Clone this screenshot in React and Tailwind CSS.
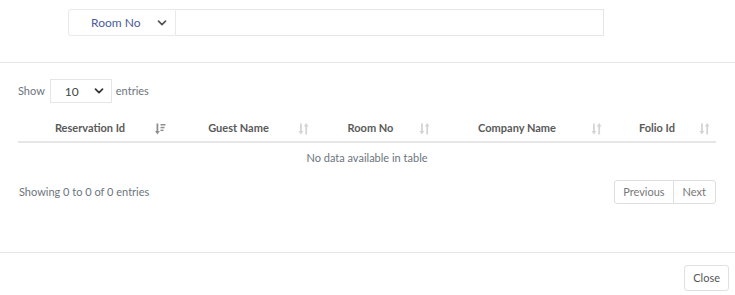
import React from 'react';

const columns = [
  { label: 'Reservation Id', width: 'w-[154px]', active: true },
  { label: 'Guest Name', width: 'w-[143px]' },
  { label: 'Room No', width: 'w-[121px]' },
  { label: 'Company Name', width: 'w-[172px]' },
  { label: 'Folio Id', width: 'w-[108px]' },
];

const Chevron = ({ className }) => (
  <svg className={className} viewBox="0 0 12 12" fill="none">
    <path d="M2.5 4.2 6 7.7l3.5-3.5" stroke="currentColor" strokeWidth="1.7" strokeLinecap="round" strokeLinejoin="round" />
  </svg>
);

const SortIcon = ({ active }) =>
  active ? (
    <svg className="h-[12px] w-[11px] text-[#8f8f8f]" viewBox="0 0 11 12" fill="currentColor">
      <rect x="1.5" y="0.5" width="1.8" height="8.5" />
      <path d="M0 8h4.8L2.4 11.5z" />
      <rect x="5.5" y="1" width="5" height="1.5" />
      <rect x="5.5" y="3.8" width="4" height="1.5" />
      <rect x="5.5" y="6.6" width="3" height="1.5" />
    </svg>
  ) : (
    <svg className="h-[12px] w-[11px] text-[#d4d4d4]" viewBox="0 0 11 12" fill="currentColor">
      <rect x="2" y="0.5" width="1.8" height="8.5" />
      <path d="M0.5 8h4.8L2.9 11.5z" />
      <rect x="7.3" y="3" width="1.8" height="8.5" />
      <path d="M5.8 3.5h4.8L8.2 0z" />
    </svg>
  );

const App = () => {
  return (
    <div className="w-[735px] h-[295px] bg-white text-[11px] text-[#6c757d] font-['Lato',sans-serif] flex flex-col">
      {/* Search bar */}
      <div className="h-[63px] border-b border-[#e6e6e6] pt-[9px] pl-[68px]">
        <div className="flex">
          <div className="w-[108px] h-[27px] border border-[#e9e9e9] rounded-l-[3px] flex items-center pl-[22px] pr-[7px] text-[12px] text-[#4b5c9a]">
            <span className="flex-1">Room No</span>
            <Chevron className="h-[12px] w-[12px] text-[#555]" />
          </div>
          <div className="w-[428px] h-[27px] border border-l-0 border-[#e6e6e6]" />
        </div>
      </div>

      {/* Table area */}
      <div className="px-[18px] pt-[16px] flex flex-col">
        <div className="flex items-center h-[24px]">
          <span className="mr-[5px]">Show</span>
          <div className="w-[62px] h-[24px] border border-[#e6e6e6] flex items-center pl-[14px] pr-[6px] text-[12px] text-[#444]">
            <span className="flex-1 pt-[2px]">10</span>
            <Chevron className="h-[12px] w-[12px] text-[#333]" />
          </div>
          <span className="ml-[4px]">entries</span>
        </div>

        <div className="mt-[10px] w-[698px]">
          <div className="flex h-[30px] border-b-2 border-[#e6e6e6]">
            {columns.map((c) => (
              <div key={c.label} className={`${c.width} relative flex items-center justify-center pr-[10px] pt-[2px] font-bold text-[#5a5a5a]`}>
                <span>{c.label}</span>
                <span className="absolute right-[6px] top-[10px]">
                  <SortIcon active={c.active} />
                </span>
              </div>
            ))}
          </div>
          <div className="h-[30px] flex items-center justify-center">No data available in table</div>
        </div>

        <div className="flex items-center justify-between w-[698px] mt-[7px]">
          <span className="pl-[1px]">Showing 0 to 0 of 0 entries</span>
          <div className="flex h-[24px] border border-[#dedede] rounded-[3px] text-[#777]">
            <span className="px-[8px] flex items-center border-r border-[#dedede]">Previous</span>
            <span className="px-[9px] flex items-center">Next</span>
          </div>
        </div>
      </div>

      {/* Footer */}
      <div className="mt-auto h-[43px] border-t border-[#e6e6e6] flex items-end justify-end pr-[6px] pb-[4px]">
        <button className="h-[26px] px-[8px] border border-[#e0e0e0] rounded-[3px] text-[#555] bg-white">Close</button>
      </div>
    </div>
  );
};

export default App;
